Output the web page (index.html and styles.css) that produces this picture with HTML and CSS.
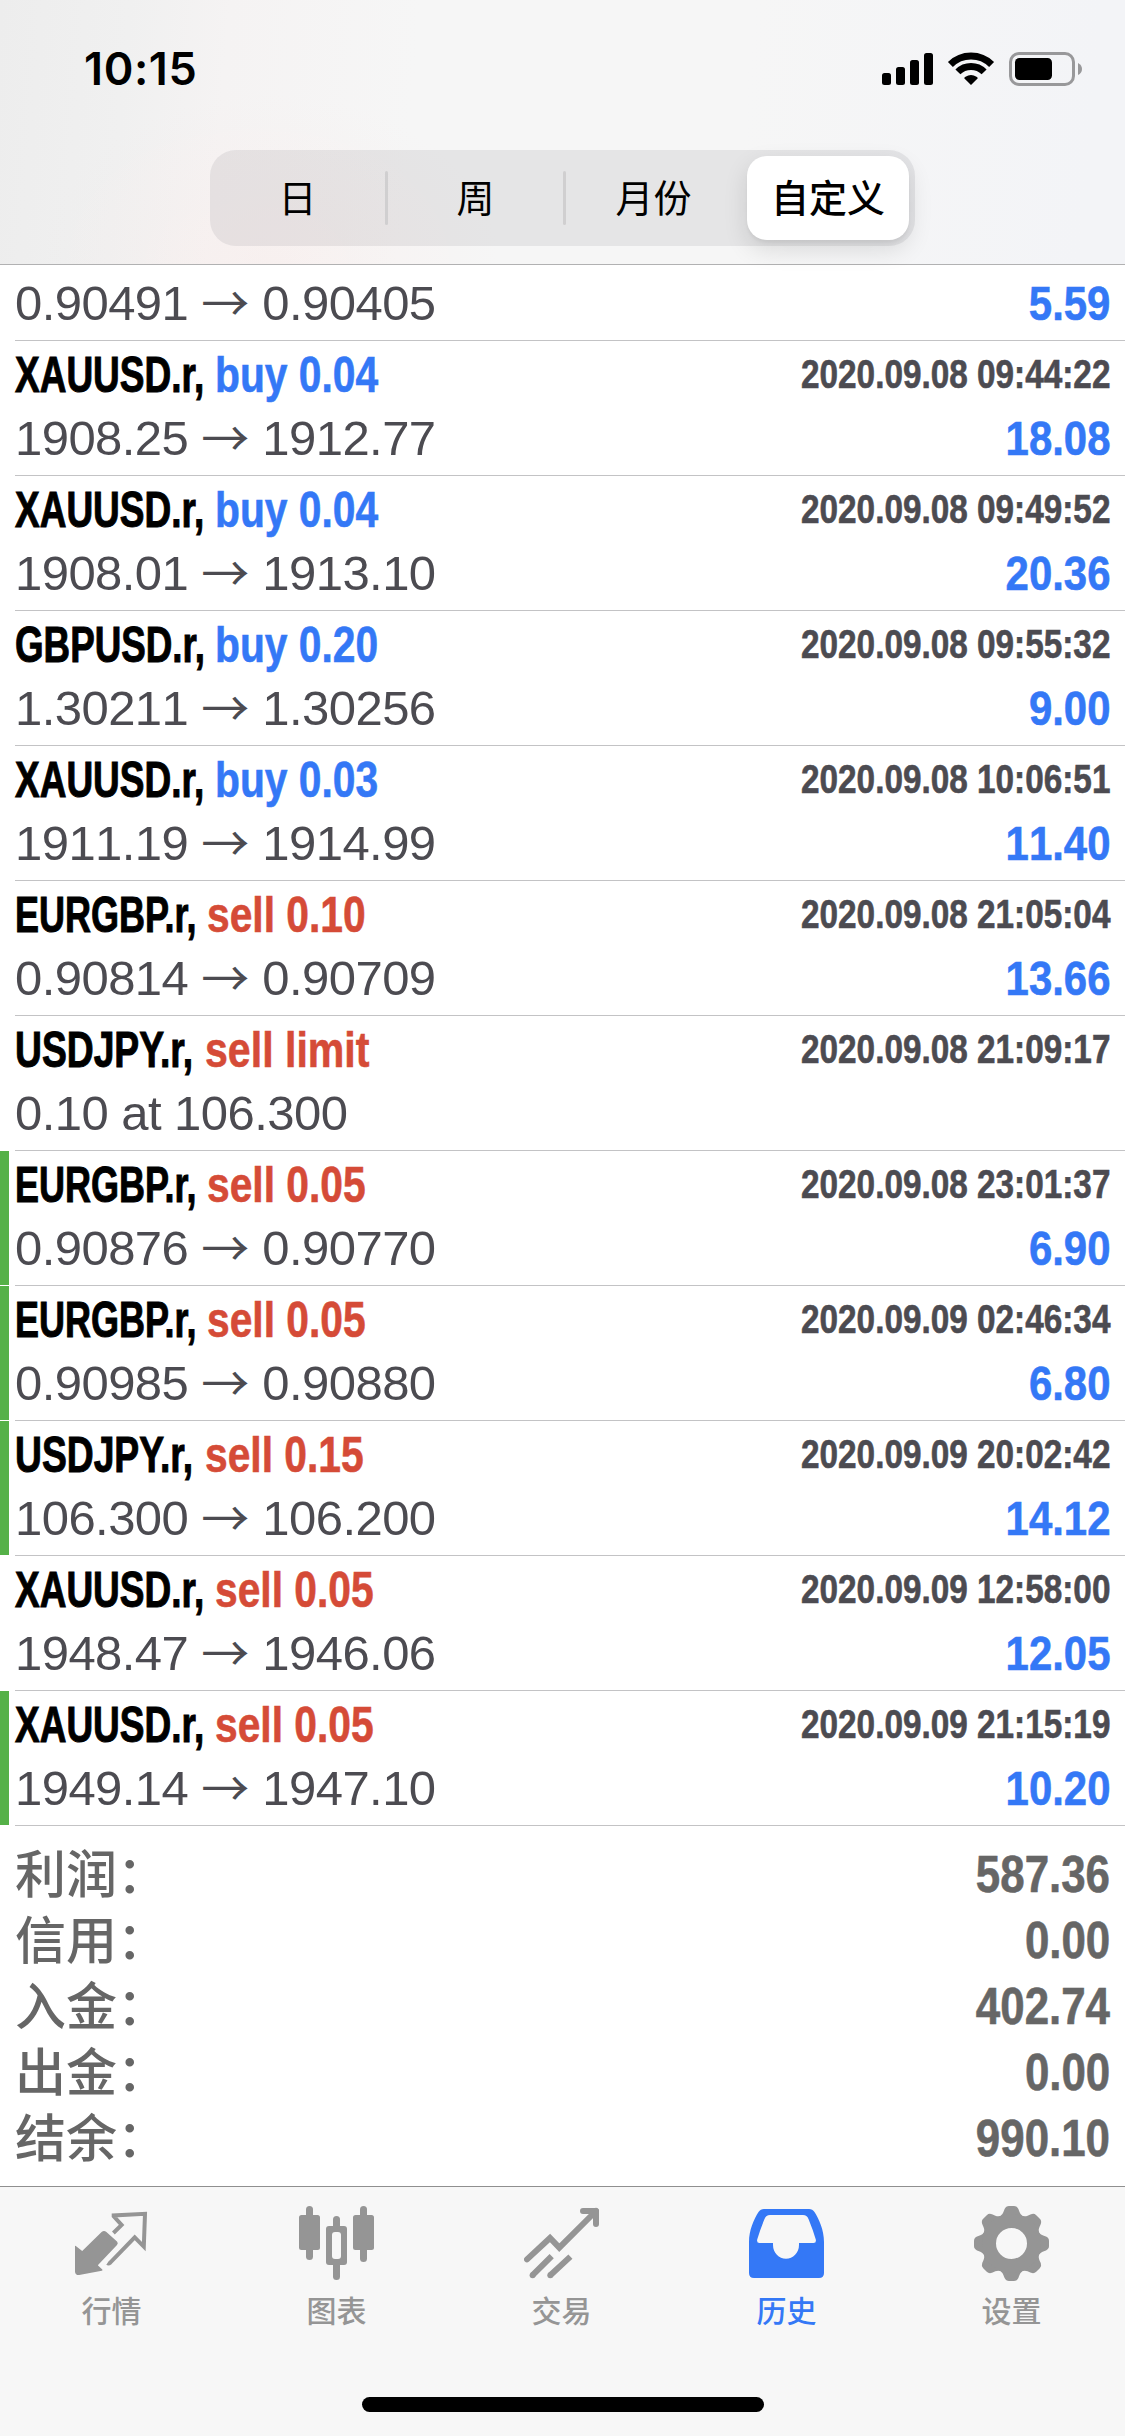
FILE: index.html
```
<!DOCTYPE html>
<html lang="zh-CN">
<head>
<meta charset="utf-8">
<title>历史</title>
<link rel="stylesheet" href="styles.css">
</head>
<body>
<div class="screen">
  <header class="header">
    <div class="status">
      <span class="clock">10:15</span>
      <svg class="status-icons" width="202" height="36" viewBox="881 51 202 36">
        <rect x="882" y="73" width="9" height="12" rx="2.5"/>
        <rect x="896" y="67" width="9" height="18" rx="2.5"/>
        <rect x="910" y="60" width="9" height="25" rx="2.5"/>
        <rect x="924" y="53" width="9" height="32" rx="2.5"/>
        <path d="M950.4 64.4A29.2 29.2 0 0 1 991.6 64.4M957.9 71.9A18.5 18.5 0 0 1 984.1 71.9" fill="none" stroke="#000" stroke-width="7"/>
        <path d="M971 85L964.2 78.2Q964.2 77.4 965.5 76.7A10 10 0 0 1 976.5 76.7Q977.8 77.4 977.8 78.2Z"/>
        <rect x="1010.5" y="53.5" width="63" height="31" rx="8.5" fill="none" stroke="#98989a" stroke-width="3"/>
        <rect x="1015" y="58" width="37" height="22" rx="4.5"/>
        <path d="M1078 63Q1082 65 1082 69T1078 75Z" fill="#98989a"/>
      </svg>
    </div>
    <nav class="segments">
      <span class="segment">日</span>
      <i class="divider"></i>
      <span class="segment">周</span>
      <i class="divider"></i>
      <span class="segment month">月份</span>
      <span class="segment active">自定义</span>
    </nav>
  </header>

  <main class="deals">
    <div class="deal partial"><div class="price">0.90491<span class="arrow">→</span>0.90405</div><div class="profit">5.59</div></div>
    <div class="deal"><div class="title"><b class="symbol xau">XAUUSD.r,</b><b class="action buy">buy 0.04</b></div><div class="time">2020.09.08 09:44:22</div><div class="price">1908.25<span class="arrow">→</span>1912.77</div><div class="profit">18.08</div></div>
    <div class="deal"><div class="title"><b class="symbol xau">XAUUSD.r,</b><b class="action buy">buy 0.04</b></div><div class="time">2020.09.08 09:49:52</div><div class="price">1908.01<span class="arrow">→</span>1913.10</div><div class="profit">20.36</div></div>
    <div class="deal"><div class="title"><b class="symbol gbp">GBPUSD.r,</b><b class="action buy">buy 0.20</b></div><div class="time">2020.09.08 09:55:32</div><div class="price">1.30211<span class="arrow">→</span>1.30256</div><div class="profit">9.00</div></div>
    <div class="deal"><div class="title"><b class="symbol xau">XAUUSD.r,</b><b class="action buy">buy 0.03</b></div><div class="time">2020.09.08 10:06:51</div><div class="price">1911.19<span class="arrow">→</span>1914.99</div><div class="profit">11.40</div></div>
    <div class="deal"><div class="title"><b class="symbol eur">EURGBP.r,</b><b class="action sell">sell 0.10</b></div><div class="time">2020.09.08 21:05:04</div><div class="price">0.90814<span class="arrow">→</span>0.90709</div><div class="profit">13.66</div></div>
    <div class="deal"><div class="title"><b class="symbol usd">USDJPY.r,</b><b class="action sell limit">sell limit</b></div><div class="time">2020.09.08 21:09:17</div><div class="price">0.10 at 106.300</div></div>
    <div class="deal marked"><div class="title"><b class="symbol eur">EURGBP.r,</b><b class="action sell">sell 0.05</b></div><div class="time">2020.09.08 23:01:37</div><div class="price">0.90876<span class="arrow">→</span>0.90770</div><div class="profit">6.90</div></div>
    <div class="deal marked"><div class="title"><b class="symbol eur">EURGBP.r,</b><b class="action sell">sell 0.05</b></div><div class="time">2020.09.09 02:46:34</div><div class="price">0.90985<span class="arrow">→</span>0.90880</div><div class="profit">6.80</div></div>
    <div class="deal marked"><div class="title"><b class="symbol usd">USDJPY.r,</b><b class="action sell">sell 0.15</b></div><div class="time">2020.09.09 20:02:42</div><div class="price">106.300<span class="arrow">→</span>106.200</div><div class="profit">14.12</div></div>
    <div class="deal"><div class="title"><b class="symbol xau">XAUUSD.r,</b><b class="action sell">sell 0.05</b></div><div class="time">2020.09.09 12:58:00</div><div class="price">1948.47<span class="arrow">→</span>1946.06</div><div class="profit">12.05</div></div>
    <div class="deal marked"><div class="title"><b class="symbol xau">XAUUSD.r,</b><b class="action sell">sell 0.05</b></div><div class="time">2020.09.09 21:15:19</div><div class="price">1949.14<span class="arrow">→</span>1947.10</div><div class="profit">10.20</div></div>
  </main>

  <section class="summary">
    <div class="total"><span class="label">利润：</span><span class="amount">587.36</span></div>
    <div class="total"><span class="label">信用：</span><span class="amount">0.00</span></div>
    <div class="total"><span class="label">入金：</span><span class="amount">402.74</span></div>
    <div class="total"><span class="label">出金：</span><span class="amount">0.00</span></div>
    <div class="total"><span class="label">结余：</span><span class="amount">990.10</span></div>
  </section>

  <footer class="footer">
    <nav class="tabs">
      <div class="tab">
        <svg class="icon" viewBox="0 0 75 75">
          <path d="M1 40.4Q1 39.4 1.8 40L8.2 45L27.6 26Q30 23.8 32.4 26L43 35.4Q44.6 37.2 43 39L23.8 59.2L28.3 63.4Q29 64.4 27.8 64.8L5.2 69Q1 69 1 65.4Z"/>
          <path d="M39.4 27L47.6 19L39.7 10.3V9.4L71 7.8L69.8 40.6L60.7 31.4L36.5 56.4Q34.6 58 33.4 57.2" fill="none" stroke="currentColor" stroke-width="4"/>
        </svg>
        <span>行情</span>
      </div>
      <div class="tab">
        <svg class="icon" viewBox="0 0 75 75">
          <rect x="7" y="0" width="7" height="54" rx="3.5"/><rect x="0" y="9" width="21" height="35" rx="2.5"/>
          <rect x="34" y="10" width="7" height="64" rx="3.5"/><rect x="27" y="20" width="21" height="39" rx="3"/>
          <rect x="33" y="26" width="9" height="27" rx="3" fill="#f7f7f7"/>
          <rect x="61" y="0" width="7" height="56" rx="3.5"/><rect x="54" y="9" width="21" height="35" rx="2.5"/>
        </svg>
        <span>图表</span>
      </div>
      <div class="tab">
        <svg class="icon" viewBox="0 0 75 75">
          <g fill="none" stroke="currentColor" stroke-width="6">
            <path d="M3 53.4L26 32L35.3 41.7L72 5" stroke-linecap="round"/>
            <path d="M59 5H72V18" stroke-linecap="round" stroke-linejoin="round"/>
            <path d="M8.6 69.2L27.7 50.2M26.3 69.2L46.4 50.6"/>
          </g>
          <circle cx="8.6" cy="69.2" r="3"/><circle cx="26.3" cy="69.2" r="3"/>
        </svg>
        <span>交易</span>
      </div>
      <div class="tab current">
        <svg class="icon" viewBox="0 0 75 75">
          <path fill-rule="evenodd" d="M0 36C0 24 5 13 9.5 6Q11.5 3 15 3H60Q63.5 3 65.5 6C70 13 75 24 75 36V67Q75 72 70 72H5Q0 72 0 67ZM10.5 37Q7.5 37 8.2 33.5Q11 24 15.5 13Q17 9 21 9H54Q58 9 59.5 13Q64 24 66.8 33.5Q67.5 37 64.5 37H50V39C50 47 44 52.7 37 52.7C30 52.7 24 47 24 39V37Z"/>
        </svg>
        <span>历史</span>
      </div>
      <div class="tab">
        <svg class="icon" viewBox="0 0 75 75">
          <defs><path id="tooth" d="M24 11C28.5 9.5 29 7 30.6 3Q32 0 35 0H40Q43 0 44.4 3C46 7 46.500 9.500 51 11L37.5 20Z"/></defs>
          <use href="#tooth"/><use href="#tooth" transform="rotate(45 37.5 37.5)"/><use href="#tooth" transform="rotate(90 37.5 37.5)"/><use href="#tooth" transform="rotate(135 37.5 37.5)"/><use href="#tooth" transform="rotate(180 37.5 37.5)"/><use href="#tooth" transform="rotate(225 37.5 37.5)"/><use href="#tooth" transform="rotate(270 37.5 37.5)"/><use href="#tooth" transform="rotate(315 37.5 37.5)"/>
          <circle cx="37.5" cy="37.5" r="22.5" fill="none" stroke="currentColor" stroke-width="14"/>
        </svg>
        <span>设置</span>
      </div>
    </nav>
    <div class="home-bar"></div>
  </footer>
</div>
</body>
</html>
```
FILE: styles.css
```
* { box-sizing: border-box; }
body { margin: 0; background: #fff; }
.screen {
  width: 1125px; height: 2436px; overflow: hidden;
  display: flex; flex-direction: column;
  font-family: "Liberation Sans", "Noto Sans CJK SC", sans-serif;
}

/* header */
.header {
  height: 265px; flex: none;
  border-bottom: 1px solid #b1b1b2;
  background:
    radial-gradient(ellipse 230px 170px at 270px 264px, rgba(255, 228, 224, .25), transparent),
    linear-gradient(95deg, #ededed 0, #f0f0f0 130px, #f5f3f3 230px, #f6f6f6 420px, #f6f6f6 750px, #f3f4f7 1100px);
}
.status {
  height: 150px; padding: 51px 42px 0 84px;
  display: flex; justify-content: space-between; align-items: flex-start;
}
.clock { font: 600 45px/36px Inter, sans-serif; letter-spacing: .6px; }
.segments {
  width: 705px; height: 96px; margin: 0 auto; padding: 6px 6px 6px 0;
  display: flex; align-items: center;
  border-radius: 26px; background: rgba(118, 118, 122, .13);
  font: 400 38px/80px "Noto Sans CJK SC", sans-serif;
}
.segment { flex: 1 1 0; height: 84px; text-align: center; }
.segment.month { padding-right: 6px; }
.segment.active {
  flex: none; width: 162px;
  border-radius: 20px; background: #fff; font-weight: 500;
  box-shadow: 0 9px 24px rgba(0, 0, 0, .12), 0 3px 3px rgba(0, 0, 0, .04);
}
.divider { width: 3px; height: 54px; border-radius: 2px; background: #d0cfd0; }

/* deal rows */
.deals { flex: none; }
.deal {
  position: relative;
  height: 135px; padding: 4px 15px 0;
  display: grid; grid-template-columns: 1fr auto; grid-template-rows: 63px 60px;
  line-height: 60px; white-space: nowrap; color: #4c4b51;
}
.deal::after {
  content: ""; position: absolute; left: 15px; right: 0; bottom: 0;
  height: 1px; background: #c3c3c5;
}
.deal.partial { height: 76px; padding-top: 8px; grid-template-rows: 60px; }
.deal.marked::before {
  content: ""; position: absolute; left: 0; top: 0; bottom: 1px;
  width: 9px; background: #55b148;
}
.title { display: flex; font-size: 50px; }
.symbol { color: #000; width: 200px; transform-origin: 0 0; -webkit-text-stroke: 1px currentColor; }
.symbol, .action { display: block; flex: none; }
.xau { transform: scaleX(.74); }
.gbp { transform: scaleX(.735); }
.eur { width: 192px; transform: scaleX(.72); }
.usd { width: 190px; transform: scaleX(.745); }
.action { transform: scaleX(.815); transform-origin: 0 0; -webkit-text-stroke: .6px currentColor; }
.action.limit { transform: scaleX(.822); }
.buy { color: #3478f6; }
.sell { color: #d54b37; }
.time {
  margin-top: -1px; font-size: 40px; font-weight: 700; font-kerning: none;
  transform: scaleX(.833); transform-origin: 100% 0; -webkit-text-stroke: .6px currentColor;
}
.price { display: flex; font-size: 49px; letter-spacing: -.55px; white-space: pre; font-kerning: none; }
.arrow {
  width: 74px; margin-top: -3px; text-align: center; letter-spacing: 0;
  font-family: "Noto Sans CJK SC", sans-serif; font-size: 48px;
}
.profit {
  color: #3478f6; font-size: 49px; font-weight: 700; text-align: right; font-kerning: none;
  transform: scaleX(.855); transform-origin: 100% 0; -webkit-text-stroke: .6px currentColor;
}

/* totals */
.summary { height: 360px; flex: none; padding: 15px 15px 0; color: #666; }
.total { height: 66px; display: flex; justify-content: space-between; line-height: 66px; font-size: 51px; }
.label { margin-top: -3px; font-family: "Noto Sans CJK SC", sans-serif; font-weight: 500; }
.amount {
  margin-top: 1px; font-weight: 700; font-kerning: none;
  transform: scaleX(.86); transform-origin: 100% 0; -webkit-text-stroke: .6px currentColor;
}

/* tab bar */
.footer { flex: 1; border-top: 1px solid #8f8f8f; background: #f7f7f7; }
.tabs { display: flex; height: 210px; margin-left: -1px; padding-top: 19px; width: 1125px; }
.tab {
  flex: 1; display: flex; flex-direction: column; align-items: center; color: #959595;
  font: 500 30px/44px "Noto Sans CJK SC", sans-serif;
}
.tab span { margin-top: 6px; }
.icon { width: 75px; height: 75px; fill: currentColor; }
.current { color: #3478f6; }
.home-bar { width: 402px; height: 15px; margin: 0 auto; border-radius: 8px; background: #000; }
```
